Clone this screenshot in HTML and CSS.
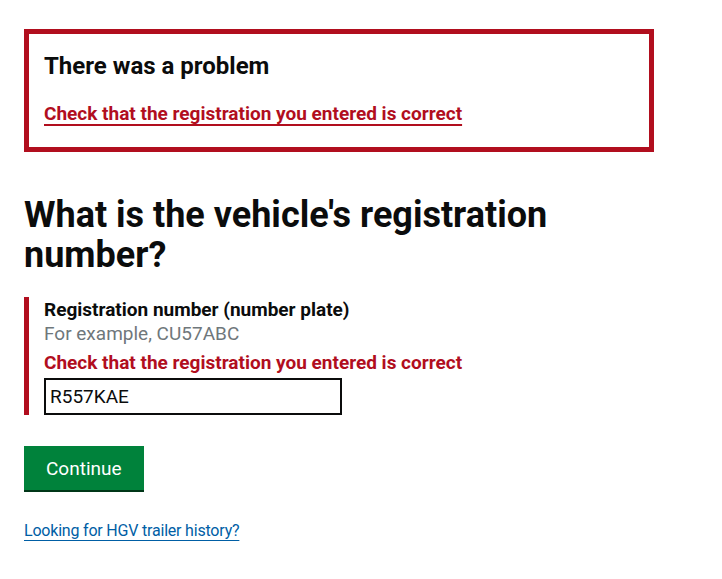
FILE: index.html
```html
<!DOCTYPE html>
<html lang="en">
<head>
    <meta charset="UTF-8">
    <meta name="viewport" content="width=device-width, initial-scale=1.0">
    <title>Vehicle registration - Error</title>
    <link rel="stylesheet" href="styles.css">
</head>
<body>
    <main class="main-wrapper">
        <div class="error-summary" role="alert">
            <h2 class="error-summary-title">There was a problem</h2>
            <ul class="error-summary-list">
                <li><a href="#vrm">Check that the registration you entered is correct</a></li>
            </ul>
        </div>

        <h1 class="heading-large">What is the vehicle's registration number?</h1>

        <form>
            <div class="form-group form-group-error">
                <label class="form-label" for="vrm">Registration number (number plate)</label>
                <span class="form-hint">For example, CU57ABC</span>
                <span class="error-message">Check that the registration you entered is correct</span>
                <input class="form-control" type="text" id="vrm" name="vrm" value="R557KAE">
            </div>
            <button type="submit" class="button">Continue</button>
        </form>

        <p class="trailer-link"><a href="#">Looking for HGV trailer history?</a></p>
    </main>
</body>
</html>
```
FILE: styles.css
```css
body {
    margin: 0;
    font-family: 'Roboto', 'Liberation Sans', sans-serif;
    color: #0b0c0c;
    background: #fff;
}
.main-wrapper {
    width: 630px;
    padding: 29px 24px 0;
}
.error-summary {
    border: 5px solid #b10e1e;
    padding: 17px 15px 21px;
}
.error-summary-title {
    margin: 0 0 20px;
    font-size: 24px;
    line-height: 30px;
    font-weight: 700;
}
.error-summary-list {
    list-style: none;
    margin: 0;
    padding: 0;
}
.error-summary-list a {
    font-size: 19px;
    line-height: 25px;
    font-weight: 700;
    color: #b10e1e;
    text-decoration-thickness: 2px;
    text-underline-offset: 4px;
}
.heading-large {
    margin: 43px 0 22px;
    font-size: 36px;
    line-height: 40px;
    font-weight: 700;
    width: 560px;
}
.form-group {
    margin-bottom: 31px;
}
.form-group-error {
    border-left: 5px solid #b10e1e;
    padding: 1px 0 0 15px;
}
.form-label,
.form-hint,
.error-message {
    display: block;
    font-size: 19px;
    line-height: 24px;
}
.form-label {
    font-weight: 700;
}
.form-hint {
    color: #6f777b;
}
.error-message {
    margin-top: 5px;
    margin-bottom: 3px;
    font-weight: 700;
    color: #b10e1e;
}
.form-control {
    display: block;
    box-sizing: border-box;
    width: 298px;
    height: 37px;
    margin: 0;
    padding: 4px 4px;
    border: 2px solid #0b0c0c;
    font-family: inherit;
    font-size: 19px;
    line-height: 25px;
    color: #0b0c0c;
    background: #fff;
}
.button {
    display: inline-block;
    padding: 10px 22px 9px;
    border: none;
    border-radius: 0;
    background: #00823b;
    box-shadow: 0 2px 0 #003618;
    font-family: inherit;
    font-size: 19px;
    line-height: 25px;
    color: #fff;
    cursor: pointer;
}
.button:hover { background: #00692f; }
.trailer-link {
    margin: 31px 0 0;
    font-size: 16px;
    line-height: 20px;
    letter-spacing: -0.2px;
}
.trailer-link a {
    color: #005ea5;
    text-decoration-thickness: 1px;
    text-underline-offset: 4px;
}
```
